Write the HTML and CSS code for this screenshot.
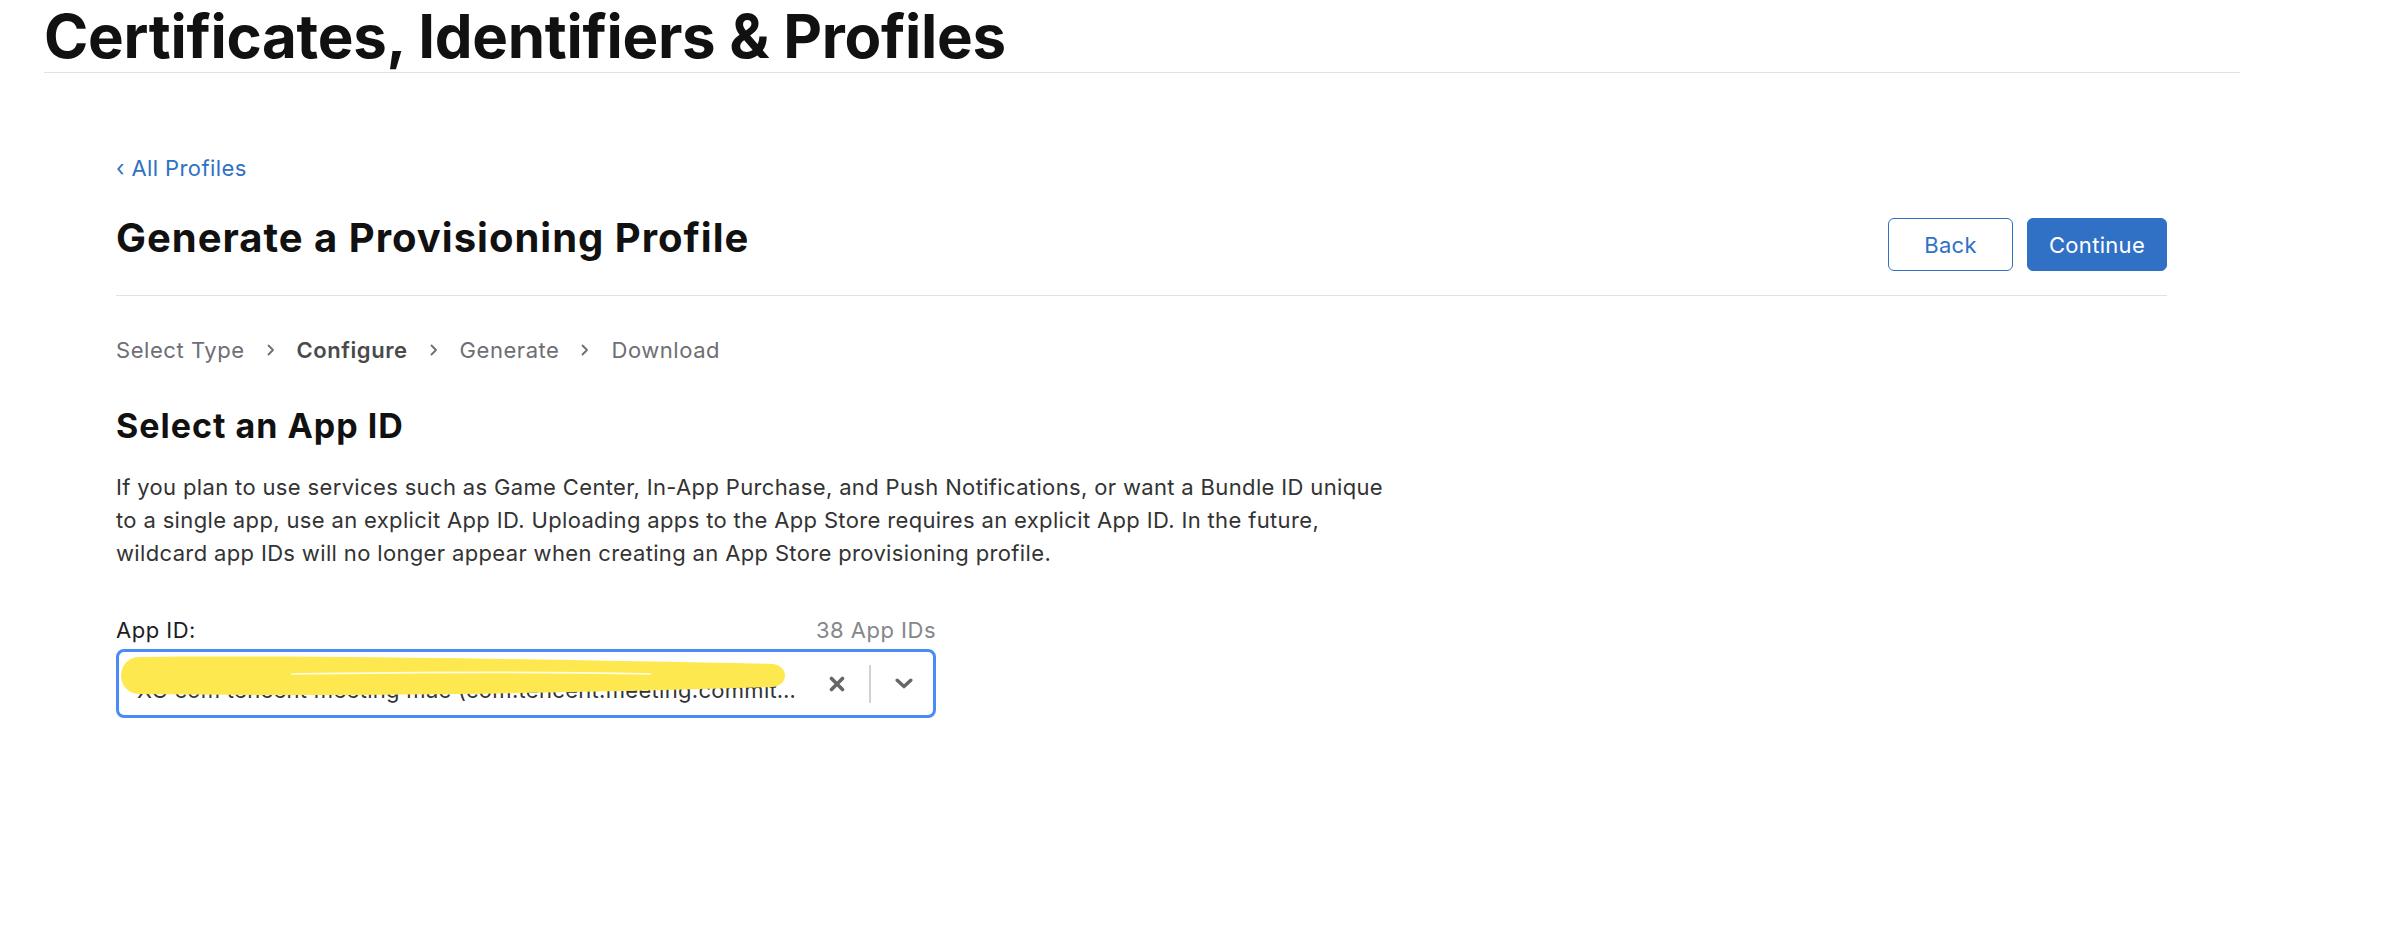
FILE: index.html
```html
<!DOCTYPE html>
<html lang="en">
<head>
    <meta charset="UTF-8">
    <meta name="viewport" content="width=device-width, initial-scale=1.0">
    <title>Certificates, Identifiers &amp; Profiles</title>
    <link rel="stylesheet" href="styles.css">
</head>
<body>

    <header class="site-header">
        <h1 class="site-title">Certificates, Identifiers &amp; Profiles</h1>
    </header>

    <main class="content">
        <a href="#" class="back-link">&lsaquo; All Profiles</a>

        <div class="page-head">
            <h2 class="page-title">Generate a Provisioning Profile</h2>
            <div class="actions">
                <button type="button" class="btn btn-secondary">Back</button>
                <button type="button" class="btn btn-primary">Continue</button>
            </div>
        </div>

        <!-- steps of the wizard -->
        <ol class="steps">
            <li>Select Type</li>
            <li class="sep"><svg width="8" height="12" viewBox="0 0 8 12"><path d="M1.5 1.5 6 6l-4.5 4.5" fill="none" stroke="#6e6e73" stroke-width="1.8" stroke-linecap="round" stroke-linejoin="round"/></svg></li>
            <li class="current">Configure</li>
            <li class="sep"><svg width="8" height="12" viewBox="0 0 8 12"><path d="M1.5 1.5 6 6l-4.5 4.5" fill="none" stroke="#6e6e73" stroke-width="1.8" stroke-linecap="round" stroke-linejoin="round"/></svg></li>
            <li>Generate</li>
            <li class="sep"><svg width="8" height="12" viewBox="0 0 8 12"><path d="M1.5 1.5 6 6l-4.5 4.5" fill="none" stroke="#6e6e73" stroke-width="1.8" stroke-linecap="round" stroke-linejoin="round"/></svg></li>
            <li>Download</li>
        </ol>

        <section class="app-id">
            <h3 class="section-title">Select an App ID</h3>
            <p class="intro">If you plan to use services such as Game Center, In-App Purchase, and Push Notifications, or want a Bundle ID unique to a single app, use an explicit App ID. Uploading apps to the App Store requires an explicit App ID. In the future, wildcard app IDs will no longer appear when creating an App Store provisioning profile.</p>

            <div class="field">
                <div class="field-head">
                    <label for="app-id">App ID:</label>
                    <span class="count">38 App IDs</span>
                </div>
                <div class="select" id="app-id">
                    <span class="value">XC com tencent meeting mac (com.tencent.meeting.commitence.mac)</span>
                    <button type="button" class="clear" aria-label="Clear">
                        <svg width="16" height="16" viewBox="0 0 16 16"><path d="M2.5 2.5l11 11M13.5 2.5l-11 11" stroke="#666" stroke-width="3.6" stroke-linecap="round"/></svg>
                    </button>
                    <span class="divider"></span>
                    <span class="toggle">
                        <svg width="18" height="11" viewBox="0 0 18 11"><path d="M2.2 2.2 9 8.6l6.8-6.4" fill="none" stroke="#666" stroke-width="3.4" stroke-linecap="round" stroke-linejoin="round"/></svg>
                    </span>
                    <!-- marker scribble hiding the id -->
                    <svg class="redact" width="666" height="42" viewBox="0 0 666 42">
                        <path d="M18 1C200 -1 450 4 652 8C668 10 668 29 652 31C450 37 250 41 18 38C-6 37 -6 2 18 1Z" fill="#fde94f"/>
                        <path d="M170 18C300 16 440 16 530 18" fill="none" stroke="#fffbe0" stroke-width="1.6"/>
                    </svg>
                </div>
            </div>
        </section>
    </main>

</body>
</html>
```

FILE: styles.css
```css
body {
    margin: 0;
    font-family: Inter, "Liberation Sans", Arial, sans-serif;
    color: #1d1d1f;
    background: #fff;
}
.site-header {
    padding: 0 156px 0 44px;
}
.site-title {
    margin: 0;
    font-size: 60px;
    line-height: 72px;
    font-weight: 700;
    color: #111;
    letter-spacing: -0.3px;
    border-bottom: 1px solid #e2e2e2;
}
.content {
    padding: 0 229px 0 116px;
}
.back-link {
    display: block;
    margin-top: 79px;
    font-size: 22px;
    line-height: 32px;
    letter-spacing: 0.4px;
    color: #2f71c5;
    text-decoration: none;
}
.page-head {
    display: flex;
    justify-content: space-between;
    align-items: flex-start;
    margin-top: 32px;
    padding-bottom: 24px;
    border-bottom: 1px solid #e2e2e2;
}
.page-title {
    margin: 0;
    font-size: 40px;
    line-height: 44px;
    font-weight: 700;
    letter-spacing: 1px;
    color: #111;
}
.actions {
    display: flex;
    gap: 14px;
    margin-top: 2px;
}
.btn {
    width: 125px;
    height: 53px;
    padding: 0;
    font-family: inherit;
    font-size: 22px;
    letter-spacing: 0.3px;
    border-radius: 6px;
    cursor: pointer;
}
.btn-secondary {
    background: #fff;
    color: #2f71c5;
    border: 1px solid #2f71c5;
}
.btn-primary {
    width: 140px;
    background: #3071c6;
    color: #fff;
    border: 1px solid #3071c6;
}
.steps {
    display: flex;
    align-items: center;
    gap: 22px;
    margin: 39px 0 0;
    padding: 0;
    list-style: none;
    font-size: 22px;
    line-height: 30px;
    letter-spacing: 0.55px;
    color: #6e6e73;
}
.steps .current {
    font-weight: 600;
    color: #4a4a4a;
}
.steps .sep {
    display: flex;
}
.section-title {
    margin: 41px 0 0;
    font-size: 34px;
    line-height: 40px;
    font-weight: 700;
    letter-spacing: 1px;
    color: #111;
}
.intro {
    max-width: 1285px;
    margin: 25px 0 0;
    font-size: 22px;
    line-height: 33px;
    letter-spacing: 0.35px;
    color: #333;
}
.field {
    width: 820px;
    margin-top: 45px;
}
.field-head {
    display: flex;
    justify-content: space-between;
    font-size: 22px;
    line-height: 30px;
    letter-spacing: 0.5px;
}
.field-head label {
    color: #1d1d1f;
}
.field-head .count {
    color: #86868b;
}
.select {
    position: relative;
    display: flex;
    align-items: center;
    height: 69px;
    margin-top: 4px;
    padding: 0 20px 0 18px;
    box-sizing: border-box;
    border: 3px solid #4a8af4;
    border-radius: 8px;
}
.select .value {
    flex: 1;
    min-width: 0;
    padding-top: 12px;
    font-size: 22px;
    line-height: 30px;
    letter-spacing: 0.3px;
    color: #333;
    white-space: nowrap;
    overflow: hidden;
    text-overflow: ellipsis;
}
.select .clear {
    display: flex;
    margin-left: 28px;
    padding: 0;
    border: none;
    background: none;
}
.select .divider {
    width: 2px;
    height: 38px;
    margin: 0 24px 0 24px;
    background: #d2d2d2;
}
.select .toggle {
    display: flex;
}
.redact {
    position: absolute;
    left: 2px;
    top: 4px;
}
```
